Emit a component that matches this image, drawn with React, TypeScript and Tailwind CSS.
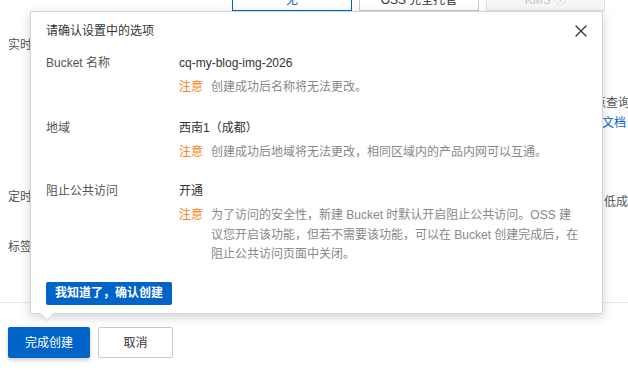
import { X } from "lucide-react"

const font = "font-['Liberation_Sans','Noto_Sans_CJK_SC',sans-serif]"

function Note({ lines }: { lines: string[] }) {
    return (
        <div className="flex gap-[8px] mt-[6px] text-[#888]">
            <div className="h-[19.5px] leading-[19.5px] text-[#f97d0a] shrink-0">注意</div>
            <div>
                {lines.map((l, i) => (
                    <div key={i} className="h-[19.5px] leading-[19.5px] whitespace-nowrap">{l}</div>
                ))}
            </div>
        </div>
    )
}

function Row({ label, value, children, className }: { label: string; value: string; children: React.ReactNode; className?: string }) {
    return (
        <div className={`flex ${className ?? ""}`}>
            <div className="w-[133px] h-[18px] shrink-0 text-[#555] leading-[18px]">{label}</div>
            <div className="flex-1">
                <div className="h-[18px] text-[#333] leading-[18px]">{value}</div>
                {children}
            </div>
        </div>
    )
}

export default function App() {
    return (
        <div className={`relative w-[628px] h-[374px] overflow-hidden bg-white text-[12px] ${font}`}>
            {/* page behind the popover */}
            <div className="flex h-[11px] pl-[232px] gap-[7px]">
                <div className="-mt-[21px] w-[120px] h-[32px] shrink-0 border border-[#0064c8] text-[#0064c8] flex items-end justify-center pb-[1px] leading-[18px]">无</div>
                <div className="-mt-[21px] w-[120px] h-[32px] shrink-0 border border-[#c9c9c9] text-[#333] flex items-end justify-center pb-[1px] leading-[18px]">OSS 完全托管</div>
                <div className="-mt-[21px] w-[119px] h-[32px] shrink-0 border border-[#e3e3e3] bg-[#f7f7f7] text-[#c4c4c4] flex items-end justify-center pb-[1px] leading-[18px]">KMS ⓘ</div>
            </div>

            <div className="flex justify-between h-[291px] text-[#555] leading-[18px]">
                <div className="pl-[8px] flex flex-col">
                    <div className="h-[18px] mt-[25px]">实时</div>
                    <div className="h-[18px] mt-[134px]">定时</div>
                    <div className="h-[18px] mt-[32px]">标签</div>
                </div>
                <div className="w-[34px] flex flex-col">
                    <div className="h-[18px] mt-[83px] whitespace-nowrap">点查询</div>
                    <div className="h-[18px] mt-[2px] pl-[8px] text-[#0064c8]">文档</div>
                    <div className="h-[18px] mt-[61px] pl-[10px] whitespace-nowrap">低成</div>
                </div>
            </div>

            <div className="border-t border-[#e5e5e5] pl-[8px] pt-[24px] flex gap-[8px]">
                <button className="w-[82px] h-[31px] bg-[#0064c8] text-white rounded-[2px] shadow-[0_2px_4px_rgba(0,0,0,0.2)]">完成创建</button>
                <button className="w-[75px] h-[31px] bg-white text-[#333] border border-[#c9c9c9] rounded-[2px]">取消</button>
            </div>

            {/* confirm popover */}
            <div className="absolute left-[30px] top-[11px] w-[573px] h-[303px] bg-white border border-[#d6d6d6] shadow-[0_3px_10px_rgba(0,0,0,0.18)] pl-[15px] pr-[11px] pt-[10px]">
                <div className="flex items-center justify-between h-[18px]">
                    <span className="text-[#333] leading-[18px]">请确认设置中的选项</span>
                    <X size={20} strokeWidth={1.5} className="text-[#333]" />
                </div>

                <Row label="Bucket 名称" value="cq-my-blog-img-2026" className="mt-[14px]">
                    <Note lines={["创建成功后名称将无法更改。"]} />
                </Row>

                <Row label="地域" value="西南1（成都）" className="mt-[21px]">
                    <Note lines={["创建成功后地域将无法更改，相同区域内的产品内网可以互通。"]} />
                </Row>

                <Row label="阻止公共访问" value="开通" className="mt-[20px]">
                    <Note
                        lines={[
                            "为了访问的安全性，新建 Bucket 时默认开启阻止公共访问。OSS 建",
                            "议您开启该功能，但若不需要该功能，可以在 Bucket 创建完成后，在",
                            "阻止公共访问页面中关闭。",
                        ]}
                    />
                </Row>

                <button className="block mt-[17px] w-[126px] h-[23px] bg-[#0064c8] text-white font-bold rounded-[2px]">我知道了，确认创建</button>

                {/* arrow */}
                <div className="absolute left-[11px] -bottom-[6px] w-[10px] h-[10px] rotate-45 bg-white border-r border-b border-[#d6d6d6]" />
            </div>
        </div>
    )
}
